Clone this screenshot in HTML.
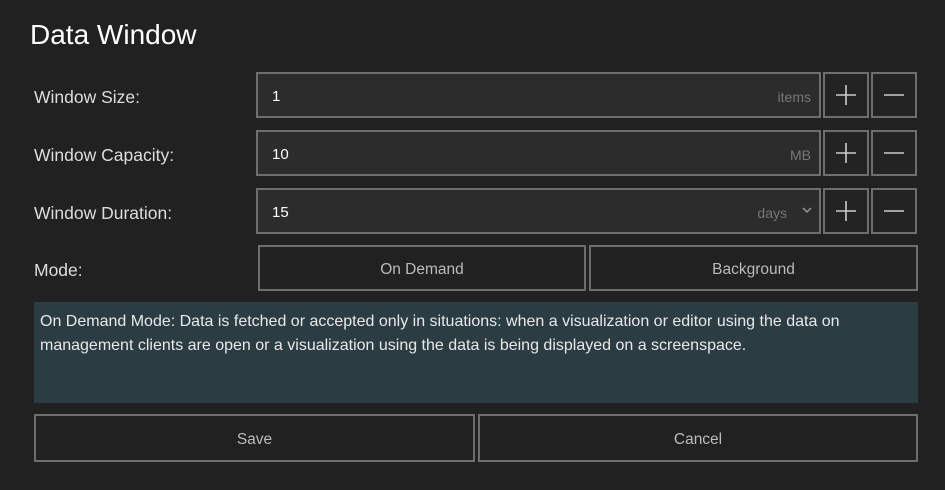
<!DOCTYPE html>
<html><head><style>
*{box-sizing:border-box;margin:0;padding:0}
body{width:945px;height:490px;background:#212121;font-family:"Liberation Sans",sans-serif;color:#e6e6e6;position:relative;overflow:hidden}
.a{position:absolute}
.t{left:30px;top:19px;font-size:28px;color:#fff}
.l{left:34px;font-size:17.5px;color:#ddd}
.in{border:2px solid #6e6e6e;background:#2c2c2c;height:46px;left:256px;width:565px}
.in .v{position:absolute;left:14px;top:14px;font-size:15px;color:#fff}
.in .u{position:absolute;right:8px;top:15px;font-size:14px;color:#777}
.b{border:2px solid #6e6e6e;background:#232323;height:46px;width:46px;display:flex;align-items:center;justify-content:center}
.btn{border:2px solid #6e6e6e;background:#212121;display:flex;align-items:center;justify-content:center;font-size:15.5px;color:#bbb;padding-top:3px}
</style></head><body>
<div class="a t">Data Window</div>
<div class="a l" style="top:87px">Window Size:</div>
<div class="a l" style="top:145px">Window Capacity:</div>
<div class="a l" style="top:203px">Window Duration:</div>
<div class="a l" style="top:260px">Mode:</div>

<div class="a in" style="top:72px"><span class="v">1</span><span class="u">items</span></div>
<div class="a in" style="top:130px"><span class="v">10</span><span class="u">MB</span></div>
<div class="a in" style="top:188px"><span class="v">15</span><span class="u" style="right:32px">days</span><span class="u" style="right:6px;top:13px"><svg width="12" height="12" viewBox="0 0 12 12"><path d="M2 4l4 4 4-4" stroke="#999" stroke-width="1.4" fill="none"/></svg></span></div>

<div class="a b" style="left:823px;top:72px"><svg width="22" height="22"><path d="M11 1v20M1 11h20" stroke="#ccc" stroke-width="1.6"/></svg></div>
<div class="a b" style="left:871px;top:72px"><svg width="22" height="22"><path d="M1 11h20" stroke="#ccc" stroke-width="1.6"/></svg></div>
<div class="a b" style="left:823px;top:130px"><svg width="22" height="22"><path d="M11 1v20M1 11h20" stroke="#ccc" stroke-width="1.6"/></svg></div>
<div class="a b" style="left:871px;top:130px"><svg width="22" height="22"><path d="M1 11h20" stroke="#ccc" stroke-width="1.6"/></svg></div>
<div class="a b" style="left:823px;top:188px"><svg width="22" height="22"><path d="M11 1v20M1 11h20" stroke="#ccc" stroke-width="1.6"/></svg></div>
<div class="a b" style="left:871px;top:188px"><svg width="22" height="22"><path d="M1 11h20" stroke="#ccc" stroke-width="1.6"/></svg></div>

<div class="a btn" style="left:258px;top:245px;width:328px;height:46px">On Demand</div>
<div class="a btn" style="left:589px;top:245px;width:329px;height:46px">Background</div>

<div class="a" style="left:34px;top:302px;width:884px;height:101px;background:#2b3d42;padding:8px 6px;font-size:16px;line-height:24px;color:#e8e8e8">On Demand Mode: Data is fetched or accepted only in situations: when a visualization or editor using the data on<br>management clients are open or a visualization using the data is being displayed on a screenspace.</div>

<div class="a btn" style="left:34px;top:414px;width:441px;height:48px">Save</div>
<div class="a btn" style="left:478px;top:414px;width:440px;height:48px">Cancel</div>
</body></html>
